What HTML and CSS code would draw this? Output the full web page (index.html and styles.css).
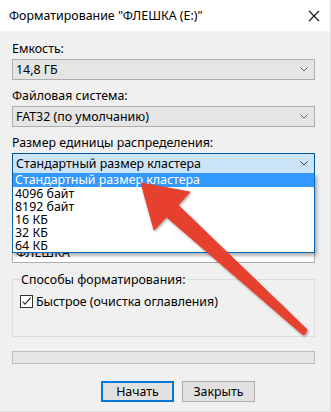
FILE: index.html
```html
<!DOCTYPE html>
<html lang="ru">
<head>
<meta charset="utf-8">
<title>Форматирование</title>
<link rel="stylesheet" href="styles.css">
</head>
<body>
<div class="window">
  <div class="titlebar">
    <span class="title">Форматирование "ФЛЕШКА (E:)"</span>
    <svg class="close" width="12" height="12" viewBox="0 0 12 12"><path d="M1 1 L11 11 M11 1 L1 11" stroke="#111" stroke-width="1.1" fill="none"/></svg>
  </div>
  <div class="content">
    <div class="label">Емкость:</div>
    <div class="combo">
      <span class="combo-text">14,8 ГБ</span>
      <svg class="chev" width="8" height="5" viewBox="0 0 8 5"><path d="M0.5 0.5 L4 4 L7.5 0.5" stroke="#606060" stroke-width="1" fill="none"/></svg>
    </div>
    <div class="label">Файловая система:</div>
    <div class="combo">
      <span class="combo-text">FAT32 (по умолчанию)</span>
      <svg class="chev" width="8" height="5" viewBox="0 0 8 5"><path d="M0.5 0.5 L4 4 L7.5 0.5" stroke="#606060" stroke-width="1" fill="none"/></svg>
    </div>
    <div class="label">Размер единицы распределения:</div>
    <div class="combo-wrap">
      <div class="combo combo-open">
        <span class="combo-text">Стандартный размер кластера</span>
        <svg class="chev" width="8" height="5" viewBox="0 0 8 5"><path d="M0.5 0.5 L4 4 L7.5 0.5" stroke="#404040" stroke-width="1" fill="none"/></svg>
      </div>
      <ul class="dropdown">
        <li class="item item-first selected">Стандартный размер кластера</li>
        <li class="item">4096 байт</li>
        <li class="item">8192 байт</li>
        <li class="item">16 КБ</li>
        <li class="item">32 КБ</li>
        <li class="item">64 КБ</li>
      </ul>
    </div>
    <div class="textfield"><span class="field-text">ФЛЕШКА</span></div>
    <fieldset class="group">
      <legend class="legend">Способы форматирования:</legend>
      <div class="check-row">
        <span class="checkbox">
          <svg width="11" height="11" viewBox="0 0 11 11"><path d="M1.5 5.5 L4 8.2 L9.5 1.8" stroke="#222" stroke-width="1.1" fill="none"/></svg>
        </span>
        <span>Быстрое (очистка оглавления)</span>
      </div>
    </fieldset>
    <div class="progress"></div>
    <div class="buttons">
      <div class="btn btn-default">Начать</div>
      <div class="btn">Закрыть</div>
    </div>
  </div>
  <svg class="arrow" width="331" height="412" viewBox="0 0 331 412">
    <defs>
      <filter id="sh" x="-10%" y="-10%" width="130%" height="130%">
        <feDropShadow dx="1" dy="1.5" stdDeviation="1" flood-color="#000" flood-opacity="0.35"/>
      </filter>
    </defs>
    <path d="M141 183 L190 192 L178 205 L307 329.5 Q306 335 302.5 334.5 L166.5 217 L154 230 Z" fill="#e6402f" stroke="#e6402f" stroke-width="1" stroke-linejoin="round" filter="url(#sh)"/>
  </svg>
</div>
</body>
</html>
```
FILE: styles.css
```css
* { box-sizing: border-box; }
html, body { margin: 0; padding: 0; background: #f0f0f0; }
body {
  font-family: "Noto Sans", "Liberation Sans", sans-serif;
  font-size: 12.4px;
  color: #000;
}
.window {
  position: relative;
  width: 331px;
  height: 412px;
  background: #f0f0f0;
  border-right: 1px solid #dedede;
  border-bottom: 1px solid #e4e4e4;
  overflow: hidden;
}
.titlebar {
  height: 31px;
  background: #fff;
  display: flex;
  align-items: center;
  justify-content: space-between;
  padding: 0 9px 0 9px;
}
.title { line-height: 15px; }
.close { margin-right: 1px; }
.content {
  padding: 10px 15px 0 12px;
}
.label {
  height: 15px;
  line-height: 15px;
  margin-bottom: 3px;
}
.combo {
  height: 21px;
  background: #e5e5e5;
  border: 1px solid #adadad;
  display: flex;
  align-items: center;
  justify-content: space-between;
  padding: 0 6px 0 3px;
  margin-bottom: 8px;
}
.combo-text { line-height: 15px; }
.combo-wrap {
  position: relative;
  margin-bottom: 68px;
}
.combo-wrap .combo { margin-bottom: 0; }
.combo-open {
  background: #cce4f7;
  border-color: #005499;
}
.dropdown {
  position: absolute;
  left: 0;
  top: 20px;
  width: 303px;
  margin: 0;
  padding: 0;
  list-style: none;
  background: #fff;
  border: 1px solid #0a64b4;
  border-top: none;
  box-shadow: 2px 3px 3px rgba(0, 0, 0, 0.28);
  z-index: 2;
}
.item {
  height: 13px;
  line-height: 13px;
  padding-left: 2px;
  white-space: nowrap;
}
.item-first { height: 14px; line-height: 14px; }
.selected { background: #3399ff; color: #fff; }
.textfield {
  height: 21px;
  background: #fff;
  border: 1px solid #adadad;
  padding-left: 3px;
  line-height: 19px;
}
.group {
  margin: 9px 0 0 0;
  padding: 0 0 27px 7px;
  border: 1px solid #dcdcdc;
  height: 65px;
}
.legend {
  padding: 0 1px;
  line-height: 15px;
}
.check-row {
  display: flex;
  align-items: center;
  gap: 3px;
  margin-top: 7px;
  line-height: 15px;
}
.checkbox {
  width: 13px;
  height: 13px;
  border: 1px solid #333;
  background: #fff;
  display: flex;
  align-items: center;
  justify-content: center;
}
.checkbox svg { display: block; }
.progress {
  margin-top: 14px;
  height: 13px;
  background: #e6e6e6;
  border: 1px solid #bcbcbc;
}
.buttons {
  display: flex;
  gap: 8px;
  margin-top: 17px;
  padding-left: 89px;
}
.btn {
  width: 73px;
  height: 21px;
  background: #e1e1e1;
  border: 1px solid #adadad;
  display: flex;
  align-items: center;
  justify-content: center;
  line-height: 15px;
}
.btn-default { border: 2px solid #0078d7; }
.arrow {
  position: absolute;
  left: 0;
  top: 0;
  z-index: 5;
  pointer-events: none;
}
```
